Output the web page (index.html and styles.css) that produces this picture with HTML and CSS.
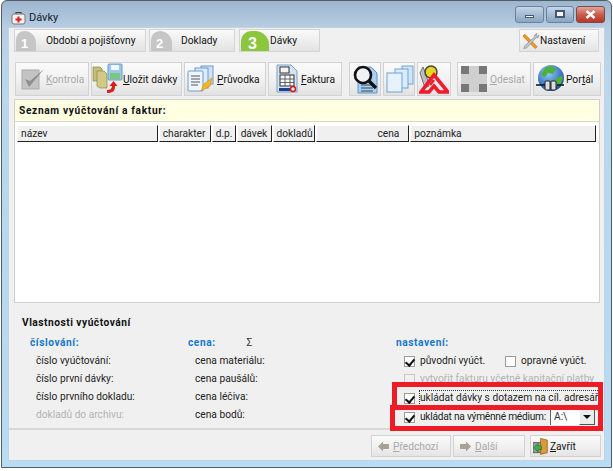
FILE: index.html
```html
<!DOCTYPE html>
<html lang="cs">
<head>
<meta charset="utf-8">
<title>Dávky</title>
<link rel="stylesheet" href="styles.css">
</head>
<body>
<div class="window">
  <div class="titlebar">
    <svg class="title-icon" width="15" height="15" viewBox="0 0 15 15"><path d="M5 4V2.500h5V4" fill="none" stroke="#444" stroke-width="1.200"/><rect x="1" y="4" width="13" height="10" rx="2" fill="#f4f2ee" stroke="#777"/><path d="M6.500 6.500h2v2h2v2h-2v2h-2v-2h-2v-2h2z" fill="#e01c1c"/></svg>
    <span class="title-text">Dávky</span>
    <div class="caption">
      <span class="cap-btn"><i class="cap-min"></i></span>
      <span class="cap-btn cap-mid"><i class="cap-max"></i></span>
      <span class="cap-btn cap-close"><svg width="13" height="9" viewBox="0 0 13 9"><path d="M2.500 1l8 7M10.500 1l-8 7" stroke="#fff" stroke-width="2.400"/></svg></span>
    </div>
  </div>
  <div class="client">
    <div class="tabs">
      <div class="tab tab-one"><span class="tab-num">1</span><span class="tab-label">Období a pojišťovny</span></div>
      <div class="tab tab-two"><span class="tab-num">2</span><span class="tab-label">Doklady</span></div>
      <div class="tab tab-three active"><span class="tab-num">3</span><span class="tab-label">Dávky</span></div>
      <div class="tab tab-settings">
        <svg width="19" height="20" viewBox="0 0 20 20"><path d="M4 3l13 13-2 2L2 5z" fill="#f39a1e" stroke="#b8650a" stroke-width=".7"/><path d="M17 2l-2.500 1.500v2L4 15l-1 3 3-.8L16 6.500h2L19 4l-2 1-1-1z" fill="#c3c8ce" stroke="#777" stroke-width=".6"/></svg>
        <span>Nastavení</span>
      </div>
    </div>

    <div class="toolbar">
      <div class="tool tool-kontrola disabled">
        <svg width="24" height="26" viewBox="0 0 24 26"><rect x="1" y="4" width="17" height="19" fill="#c4c4c4" stroke="#aaa"/><path d="M4 13l4 8L23 3l-14 12z" fill="#8f8f8f"/></svg>
        <span><u>K</u>ontrola</span>
      </div>
      <div class="tool tool-ulozit">
        <svg width="31" height="32" viewBox="0 0 31 32"><path d="M1 4h7l2 2v12H1z" fill="#c8bd76" stroke="#8a8350" stroke-width=".7"/><path d="M5 8h7l3 3v14H8l-3-2z" fill="#d2c987" stroke="#8a8350" stroke-width=".7"/><rect x="16" y="1" width="14" height="16" rx="1" fill="#9cc8ec" stroke="#6d9cc4"/><rect x="19" y="2" width="8" height="5" fill="#f2f6fa"/><rect x="18" y="10" width="10" height="6" fill="#7cc77c"/><path d="M15 30c6 0 8-2 8-7h2.500l-4-5-4 5H20c0 3-2 4-5 4z" fill="#dd1c1c"/></svg>
        <span><u>U</u>ložit dávky</span>
      </div>
      <div class="tool tool-pruvodka">
        <svg width="28" height="28" viewBox="0 0 28 28"><rect x="14" y="1" width="12" height="18" fill="#cfe2f6" stroke="#6b9ccc"/><rect x="8" y="3" width="13" height="20" fill="#dceafa" stroke="#6b9ccc"/><rect x="1" y="6" width="15" height="20" rx="1" fill="#eef5fc" stroke="#6b9ccc"/><path d="M4 11h9M4 14h9M4 17h9M4 20h7" stroke="#555" stroke-width="1.100"/><path d="M25 13l-8 6-3 7 9-5z" fill="#f5b91f" stroke="#c98a10" stroke-width=".6"/></svg>
        <span><u>P</u>růvodka</span>
      </div>
      <div class="tool tool-faktura">
        <svg width="24" height="30" viewBox="0 0 24 30"><path d="M2 1h14l6 6v21H2z" fill="#d3e4f5" stroke="#7b9fc4"/><rect x="5" y="3" width="9" height="6" fill="#f4f4f4" stroke="#333"/><rect x="5" y="11" width="14" height="11" fill="#f7f7f7" stroke="#333"/><path d="M5 15h14M5 18.500h14M10 11v11M15 11v11" stroke="#444" stroke-width=".8"/><rect x="4" y="24" width="11" height="3" fill="#1f3f8f"/><circle cx="18" cy="25" r="2.500" fill="none" stroke="#d81a1a" stroke-width="1.400"/></svg>
        <span><u>F</u>aktura</span>
      </div>
      <div class="tool-gap"></div>
      <div class="tool tool-icon tool-lupa">
        <svg width="25" height="29" viewBox="0 0 25 29"><path d="M5 2h13l6 6v20H5z" fill="#a9d0f2" stroke="#5c93c8"/><path d="M8 20h12M8 23h12M8 26h12" stroke="#234" stroke-width=".9"/><circle cx="10" cy="10" r="8" fill="#eef2f5" stroke="#111" stroke-width="2.600"/><path d="M16 16l7 7" stroke="#111" stroke-width="3.400"/></svg>
      </div>
      <div class="tool tool-icon tool-kopie">
        <svg width="29" height="28" viewBox="0 0 29 28"><rect x="17" y="1" width="11" height="18" fill="#d2e6f9" stroke="#6da3d6"/><rect x="10" y="4" width="13" height="19" fill="#dcecfb" stroke="#6da3d6"/><rect x="2" y="8" width="15" height="19" fill="#e7f2fd" stroke="#6da3d6"/></svg>
      </div>
      <div class="tool tool-icon tool-klic">
        <svg width="30" height="30" viewBox="0 0 30 30"><path d="M4 3l-3 6 5 15 4-2-3-12z" fill="#bdbdbd" stroke="#555" stroke-width=".8"/><circle cx="12" cy="8" r="6" fill="#e5d81f" stroke="#444" stroke-width="1.500"/><path d="M2 28L15 11l14 17h-9l-5-6-5 6z" fill="none" stroke="#ee1c2e" stroke-width="3.600"/><path d="M15 16l-4 5M15 22l5 6" stroke="#ee1c2e" stroke-width="2.600"/></svg>
      </div>
      <div class="tool-gap tool-gap-small"></div>
      <div class="tool tool-odeslat disabled">
        <svg width="26" height="26" viewBox="0 0 26 26"><rect width="26" height="26" fill="#cfcfcf"/><rect width="8" height="8" fill="#777"/><rect x="18" width="8" height="8" fill="#777"/><rect y="18" width="8" height="8" fill="#777"/><rect x="18" y="18" width="8" height="8" fill="#777"/></svg>
        <span><u>O</u>deslat</span>
      </div>
      <div class="tool tool-portal">
        <svg width="30" height="30" viewBox="0 0 30 30"><defs><radialGradient id="g" cx=".4" cy=".3" r=".8"><stop offset="0" stop-color="#8fd0f5"/><stop offset="1" stop-color="#0c3f9e"/></radialGradient></defs><circle cx="16" cy="14" r="13" fill="url(#g)"/><path d="M10 4c4-3 9-2 11 1l-3 5-5-1-3 4-4-2zM20 15l6-3 2 2-3 8-4-1z" fill="#4fae3c"/><path d="M1 21h9M22 21h7" stroke="#111" stroke-width="1.400"/><rect x="10" y="17" width="5" height="9" rx="1" fill="#ddd" stroke="#222"/><rect x="16" y="17" width="5" height="9" rx="1" fill="#ddd" stroke="#222"/></svg>
        <span>Por<u>t</u>ál</span>
      </div>
    </div>

    <div class="list-panel">
      <div class="list-title">Seznam vyúčtování a faktur:</div>
      <div class="list-body">
        <div class="list-head">
          <span class="col col-nazev">název</span>
          <span class="col col-char">charakter</span>
          <span class="col col-dp">d.p.</span>
          <span class="col col-davek">dávek</span>
          <span class="col col-dokl">dokladů</span>
          <span class="col col-cena">cena</span>
          <span class="col col-pozn">poznámka</span>
        </div>
      </div>
    </div>

    <div class="props">
      <div class="props-title">Vlastnosti vyúčtování</div>
      <div class="props-grid">
        <div class="props-col col-cisl">
          <div class="head">číslování:</div>
          <div class="row">číslo vyúčtování:</div>
          <div class="row">číslo první dávky:</div>
          <div class="row">číslo prvního dokladu:</div>
          <div class="row muted">dokladů do archivu:</div>
        </div>
        <div class="props-col col-cen">
          <div class="head">cena:<span class="sigma">Σ</span></div>
          <div class="row">cena materiálu:</div>
          <div class="row">cena paušálů:</div>
          <div class="row">cena léčiva:</div>
          <div class="row">cena bodů:</div>
        </div>
        <div class="props-col col-nast">
          <div class="head">nastavení:</div>
          <div class="row check-row">
            <span class="check on"></span><span class="check-label first-label">původní vyúčt.</span>
            <span class="check"></span><span class="check-label">opravné vyúčt.</span>
          </div>
          <div class="row check-row muted">
            <span class="check off"></span><span class="check-label">vytvořit fakturu včetně kapitační platby</span>
          </div>
          <div class="row check-row row-low">
            <span class="check on"></span><span class="check-label focused">ukládat dávky s dotazem na cíl. adresář</span>
          </div>
          <div class="row check-row row-low">
            <span class="check on"></span><span class="check-label tight-label">ukládat na výměnné médium:</span>
            <span class="combo"><span class="combo-text">A:\</span><span class="combo-btn"></span></span>
          </div>
        </div>
      </div>
    </div>

    <div class="footer">
      <div class="btn btn-prev disabled">
        <svg width="11" height="11" viewBox="0 0 13 12"><path d="M0 6l6-6v3h7v6H6v3z" fill="#a9a294"/></svg>
        <span><u>P</u>ředchozí</span>
      </div>
      <div class="btn btn-next disabled">
        <svg width="11" height="11" viewBox="0 0 13 12"><path d="M13 6L7 0v3H0v6h7v3z" fill="#a9a294"/></svg>
        <span><u>D</u>alší</span>
      </div>
      <div class="btn btn-close">
        <svg width="16" height="18" viewBox="0 0 19 20"><rect x="0" y="6" width="12" height="12" fill="#9a9a9a" stroke="#555"/><path d="M9 1l8 2v15l-8 2z" fill="#d99a3a" stroke="#8a5a14" stroke-width=".8"/><path d="M1 12l5-5v3h4v4H6v3z" fill="#38b54a" stroke="#14631f" stroke-width=".7"/></svg>
        <span><u>Z</u>avřít</span>
      </div>
    </div>

    <div class="mark mark-one"></div>
    <div class="mark mark-two"></div>
  </div>
</div>
</body>
</html>
```
FILE: styles.css
```css
* { box-sizing: border-box; }
html, body { margin: 0; padding: 0; }
body {
  width: 613px;
  height: 471px;
  overflow: hidden;
  background: #fff;
  font: 10.2px/13px Roboto, "Liberation Sans", Arial, sans-serif;
  color: #111;
}
u { text-decoration: underline; }
.window {
  width: 611px;
  height: 468px;
  margin: 0 0 0 1px;
  border: 1px solid #555c62;
  border-radius: 6px 6px 0 0;
  background: linear-gradient(#9db6cf, #b6cde2 26px, #b9d6ec 60px, #b7dcf3);
  padding: 0 6px 6px;
  display: flex;
  flex-direction: column;
}
.titlebar {
  height: 26px;
  flex: none;
  display: flex;
  align-items: center;
  margin-left: 3px;
  padding-top: 6px;
}
.title-icon { flex: none; }
.title-text { margin-left: 3px; font-size: 11px; color: #16202a; }
.caption {
  margin-left: auto;
  margin-top: -6px;
  display: flex;
  gap: 2px;
}
.cap-btn {
  width: 29px;
  height: 17px;
  border: 1px solid #6d8196;
  border-radius: 3px;
  background: linear-gradient(#c4d6e8, #a6bdd5 50%, #8ba6c2);
  display: flex;
  align-items: center;
  justify-content: center;
}
.cap-mid { width: 28px; }
.cap-close {
  width: 29px;
  background: linear-gradient(#e0a79c, #cc5c4c 50%, #b6382a);
  border-color: #7c4a44;
}
.cap-min { width: 9px; height: 3px; margin-top: 5px; background: #f4f6f8; border: 1px solid #46586c; }
.cap-max { width: 10px; height: 8px; background: #f4f6f8; border: 2px solid #46586c; }

.client {
  position: relative;
  flex: 1;
  background: #f0f0f0;
  border: 1px solid #c3d2e0;
  display: flex;
  flex-direction: column;
  min-height: 0;
}

.tabs {
  display: flex;
  height: 24px;
  margin: 1px 0 0 5px;
  flex: none;
}
.tab {
  height: 23px;
  background: linear-gradient(#fafafa, #ececec 60%, #e2e2e2);
  border: 1px solid #d4d4d4;
  display: flex;
  align-items: center;
  position: relative;
  overflow: hidden;
}
.tab-one { width: 132px; }
.tab-two { width: 86px; margin-left: 3px; }
.tab-three { width: 81px; margin-left: 4px; }
.tab-settings { width: 80px; margin-left: auto; margin-right: 5px; padding-left: 1px; background: linear-gradient(#fafafa, #efefef 60%, #e4e4e4); }
.tab-num {
  width: 20px;
  height: 20px;
  flex: none;
  align-self: flex-end;
  margin-left: 1px;
  background: #c6c6c6;
  border-radius: 10px 14px 0 0;
  color: #fff;
  font: bold 13px/18px "Liberation Sans", Arial, sans-serif;
  padding: 4px 0 0 5px;
}
.tab-two .tab-num { width: 21px; }
.active .tab-num {
  width: 28px;
  height: 20px;
  background: #8cc63f;
  font-size: 16px;
  padding: 3px 0 0 7px;
  line-height: 20px;
}
.tab-one .tab-label { margin-left: 10px; }
.tab-two .tab-label { margin-left: 9px; }
.tab-three .tab-label { margin-left: 1px; }

.toolbar {
  display: flex;
  height: 34px;
  margin: 9px 0 0 6px;
  flex: none;
  gap: 2px;
}
.tool {
  height: 34px;
  background: linear-gradient(#fbfbfb, #f0f0f0 55%, #e2e2e2);
  border: 1px solid #d2d2d2;
  display: flex;
  align-items: center;
  overflow: hidden;
  gap: 1px;
  white-space: nowrap;
}
.tool-kontrola { width: 74px; padding-left: 5px; }
.tool-ulozit { width: 91px; gap: 0; }
.tool-pruvodka { width: 82px; padding-left: 2px; gap: 2px; }
.tool-faktura { width: 74px; padding-left: 6px; gap: 2px; }
.tool-icon { justify-content: center; gap: 0; }
.tool-lupa { width: 32px; }
.tool-kopie { width: 32px; }
.tool-klic { width: 34px; }
.tool-odeslat { width: 74px; padding-left: 3px; gap: 3px; }
.tool-portal { width: 68px; padding-left: 1px; gap: 1px; }
.tool-gap { width: 3px; flex: none; }
.tool-gap-small { width: 2px; }
.disabled { color: #a8a8a8; }

.list-panel {
  margin: 3px 4px 0 5px;
  height: 204px;
  flex: none;
  border: 1px solid #cfcfcf;
  background: #fff;
  display: flex;
  flex-direction: column;
}
.list-title {
  height: 22px;
  flex: none;
  background: #ffffe1;
  border-bottom: 1px solid #d8d8c8;
  font-weight: bold;
  line-height: 21px;
  letter-spacing: .65px;
  padding-left: 4px;
}
.list-body {
  flex: 1;
  padding: 3px 3px 0 2px;
  background: #fff;
}
.list-head {
  display: flex;
  height: 17px;
}
.col {
  background: #f0f0f0;
  border-right: 1px solid #222;
  border-bottom: 1px solid #222;
  border-top: 1px solid #fff;
  border-left: 1px solid #fff;
  margin-right: 1px;
  line-height: 15px;
  padding-left: 3px;
  color: #222;
  white-space: nowrap;
  overflow: hidden;
}
.col-nazev { width: 141px; }
.col-char { width: 52px; }
.col-dp { width: 24px; }
.col-davek { width: 35px; }
.col-dokl { width: 42px; }
.col-cena { width: 94px; text-align: right; padding-right: 9px; }
.col-pozn { width: 186px; margin-right: 0; }

.props {
  flex: 1;
  padding: 13px 0 0 14px;
  border-bottom: 2px solid #d8d8d8;
}
.props-title {
  font-weight: bold;
  line-height: 13px;
  margin-left: -1px;
  letter-spacing: .5px;
}
.props-grid {
  display: flex;
  margin-top: 7px;
}
.props-col { flex: none; }
.col-cisl { width: 165px; padding-left: 7px; }
.col-cen { width: 208px; }
.col-nast { flex: 1; }
.head {
  color: #1777c9;
  font-weight: bold;
  height: 16px;
  line-height: 13px;
  letter-spacing: .55px;
}
.sigma { color: #333; font-weight: normal; margin-left: 31px; }
.row {
  height: 18px;
  line-height: 18px;
  padding-left: 7px;
  color: #222;
}
.row-low { margin-top: 1px; }
.col-cisl .row { padding-left: 6px; }
.muted, .muted .check-label { color: #b2b2b2; }
.check-row { display: flex; align-items: center; padding-left: 8px; white-space: nowrap; }
.check {
  width: 11px;
  height: 11px;
  flex: none;
  background: #fff;
  border: 1px solid #9a9a9a;
  position: relative;
}
.check.off { border-color: #c8c8c8; background: #f0f0f0; }
.check.on::after {
  content: "";
  position: absolute;
  left: 2px;
  top: 0;
  width: 4px;
  height: 7px;
  border: solid #111;
  border-width: 0 2px 2px 0;
  transform: rotate(40deg);
}
.check-label { margin-left: 5px; }
.first-label { width: 85px; }
.focused { outline: 1px dotted #333; line-height: 14px; padding-right: 1px; }
.tight-label { letter-spacing: -.25px; }
.combo {
  width: 45px;
  height: 16px;
  margin-left: auto;
  margin-right: 9px;
  flex: none;
  display: flex;
  background: #fff;
  border-left: 1px solid #666;
  border-top: 1px solid #ddd;
  line-height: 14px;
}
.combo-text { flex: 1; padding-left: 3px; color: #333; }
.combo-btn {
  width: 16px;
  background: #ececec;
  border-right: 1px solid #555;
  border-bottom: 1px solid #555;
  border-left: 1px solid #fff;
  position: relative;
}
.combo-btn::after {
  content: "";
  position: absolute;
  left: 3px;
  top: 5px;
  border: 4px solid transparent;
  border-top: 4px solid #111;
  border-bottom: 0;
}

.footer {
  display: flex;
  height: 30px;
  flex: none;
  padding: 5px 3px 0 0;
  justify-content: flex-end;
}
.btn {
  height: 22px;
  background: linear-gradient(#fafafa, #efefef 60%, #e4e4e4);
  border: 1px solid #d2d2d2;
  display: flex;
  align-items: center;
  gap: 4px;
}
.btn-prev { width: 80px; padding-left: 6px; }
.btn-next { width: 72px; margin-left: 2px; padding-left: 6px; }
.btn-close { width: 71px; margin-left: 5px; padding-left: 2px; gap: 1px; }

.mark { position: absolute; border: 5px solid #ee1c25; pointer-events: none; }
.mark-one { left: 383px; top: 354px; width: 211px; height: 24px; border-bottom-width: 0; }
.mark-two { left: 381px; top: 377px; width: 213px; height: 26px; }
```
